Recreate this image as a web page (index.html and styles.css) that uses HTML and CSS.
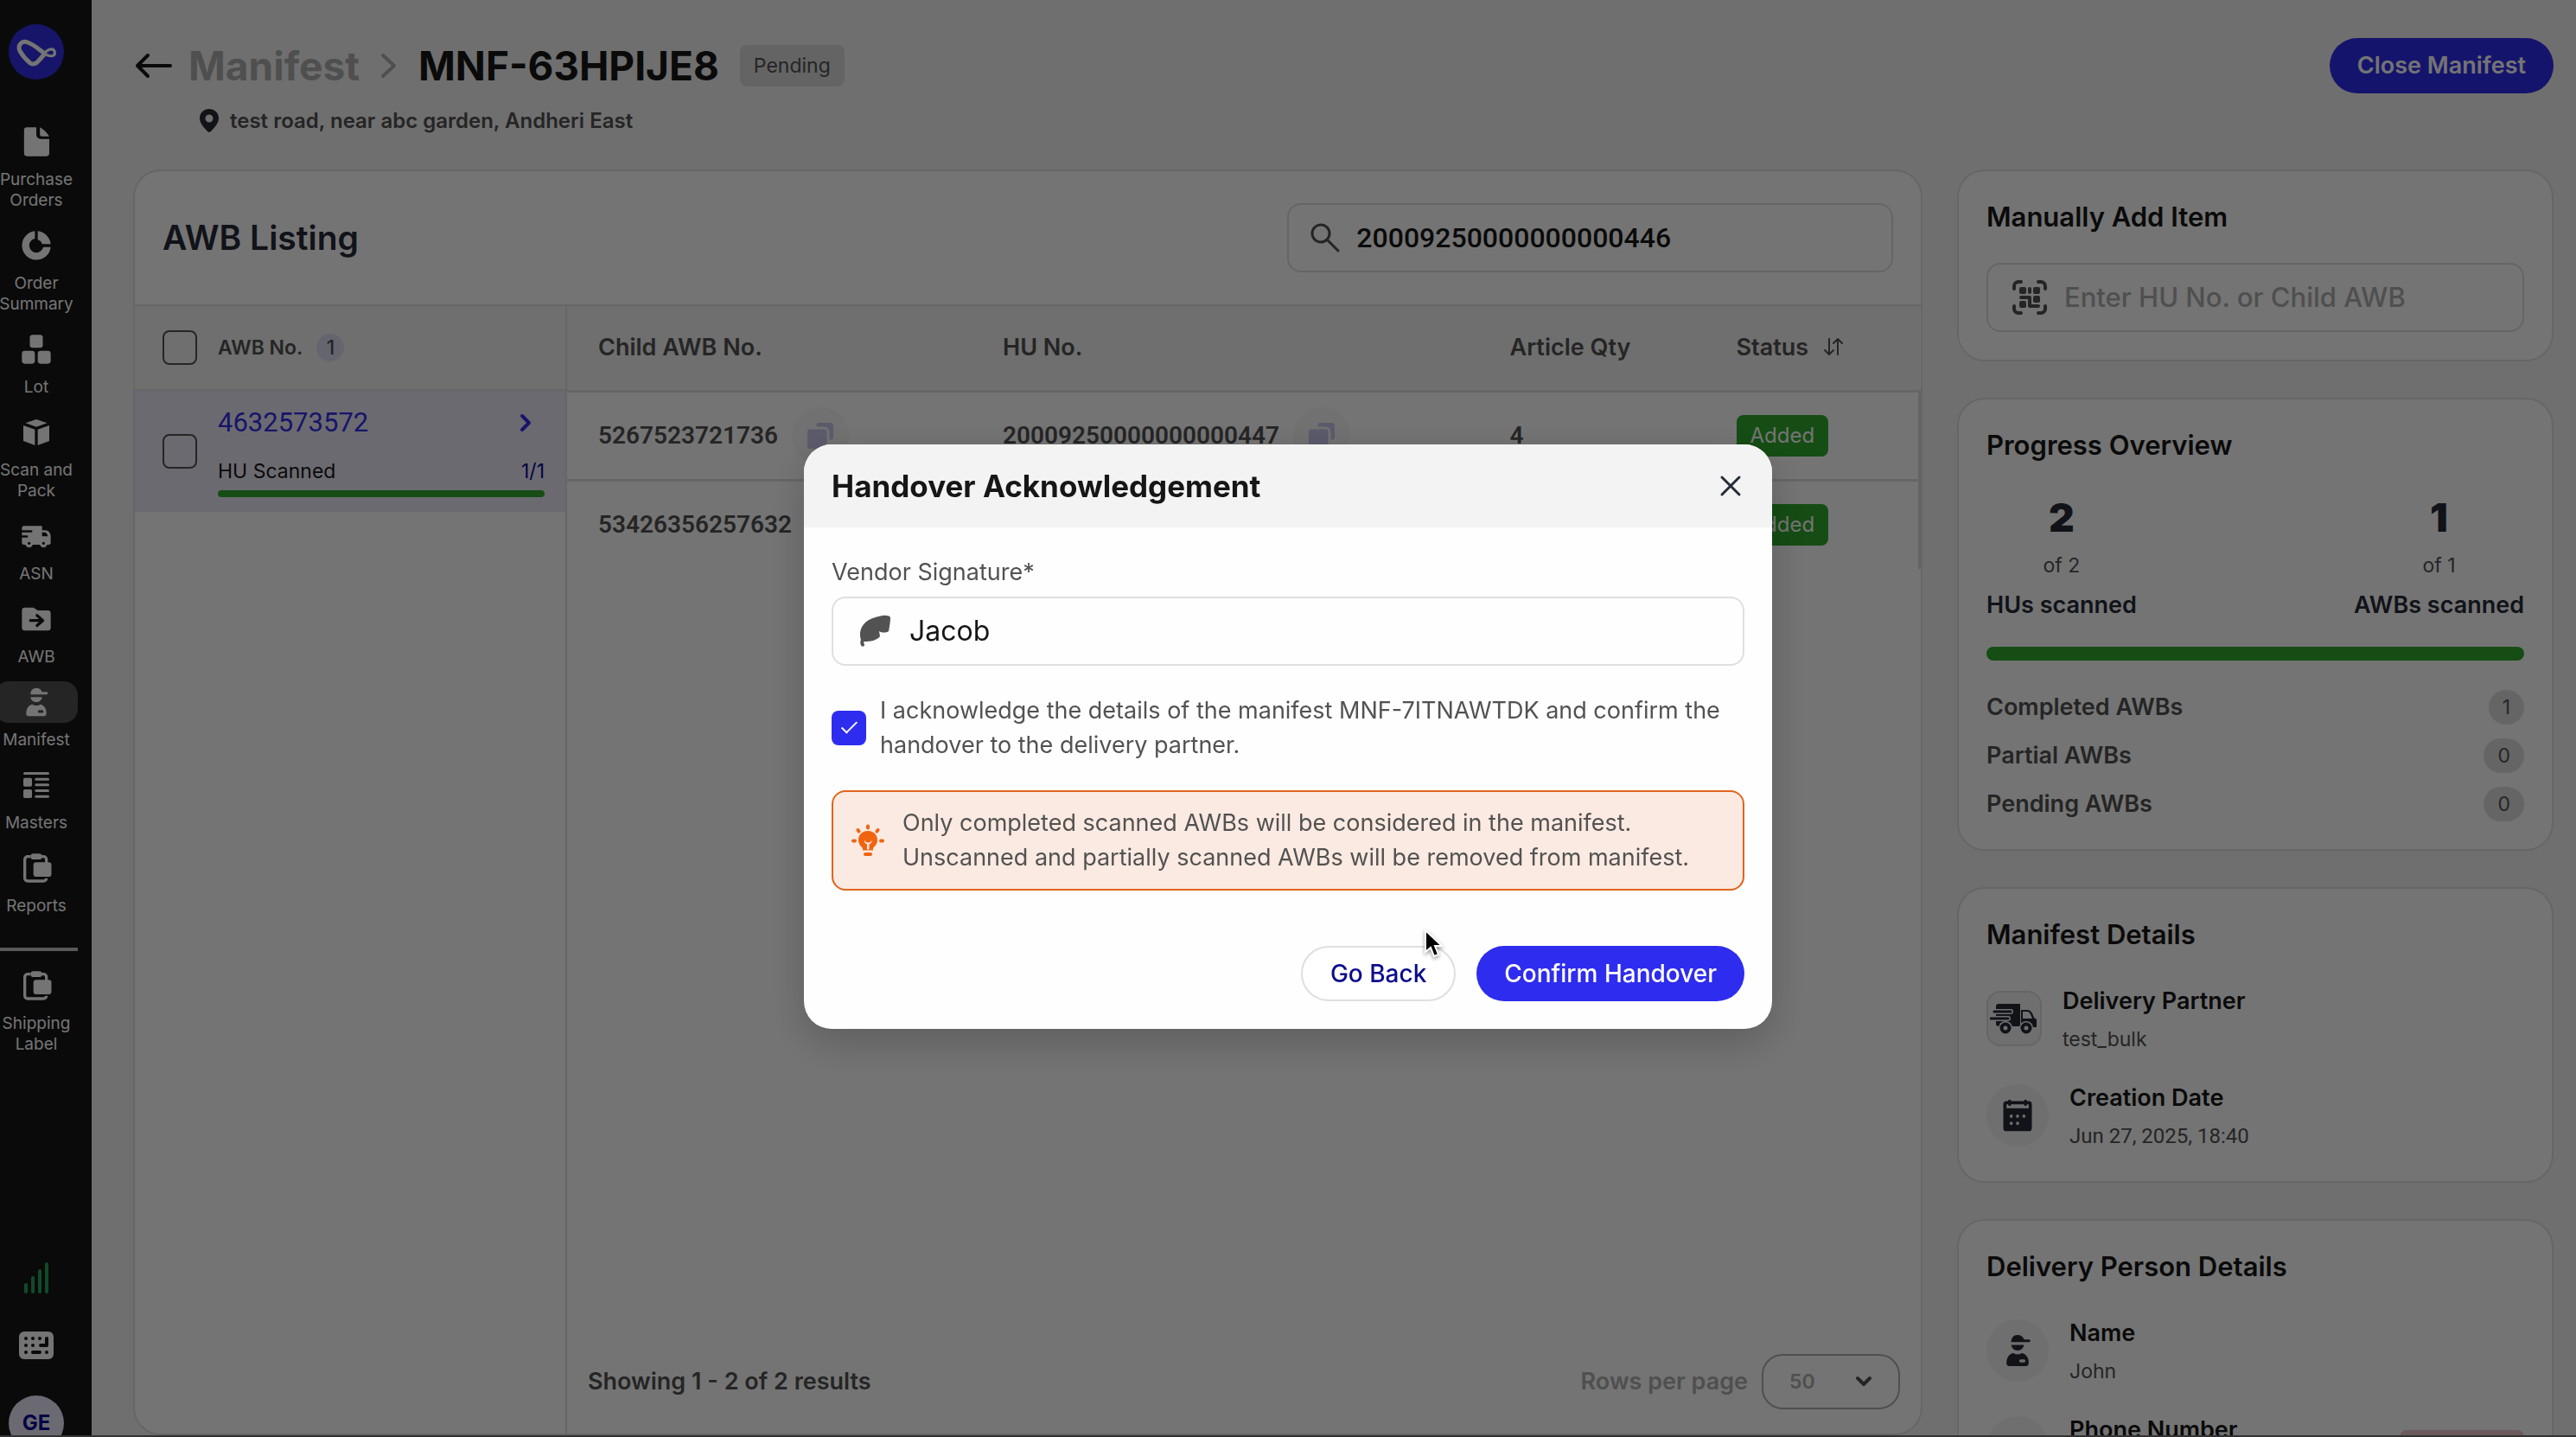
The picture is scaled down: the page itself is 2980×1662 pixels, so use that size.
FILE: index.html
```html
<!DOCTYPE html>
<html lang="en">
<head>
  <meta charset="UTF-8">
  <meta name="viewport" content="width=device-width, initial-scale=1.0">
  <title>Manifest - MNF-63HPIJE8</title>
  <link rel="stylesheet" href="styles.css">
</head>
<body>
  <!-- Shared icons -->
  <svg class="sprite" aria-hidden="true">
    <symbol id="i-clipboard" viewBox="0 0 24 24">
      <path fill="none" stroke="currentColor" stroke-width="2" d="M8 4H6a2 2 0 0 0-2 2v13a2 2 0 0 0 2 2h11a2 2 0 0 0 2-2M15 4h2a2 2 0 0 1 2 2v3"/>
      <rect x="8" y="2" width="8" height="4" rx="2"/>
      <rect x="10" y="8" width="12.500" height="10" rx="2"/>
    </symbol>
    <symbol id="i-person" viewBox="0 0 24 24">
      <path d="M8 6.500C8 4 9.500 2.200 12 2.200c2 0 3.500 1.200 4 2.800h3.200a.8.800 0 0 1 0 1.700H8z"/>
      <path d="M8 8.500h8c-.3 2.200-2 3.500-4 3.500s-3.700-1.300-4-3.500z"/>
      <path fill-rule="evenodd" d="M9.300 13.500c.8 1.200 4.600 1.200 5.400 0 3 .8 4.500 3.500 4.300 6.500 0 1-.6 1.800-1.600 1.800H6.600c-1 0-1.600-.8-1.600-1.800 0-3.200 1.300-5.700 4.300-6.500zM14 17.600a.9.900 0 0 0 0 1.900h2a.9.900 0 0 0 0-1.900z"/>
    </symbol>
    <symbol id="i-copy" viewBox="0 0 24 24">
      <path d="M9 4a2 2 0 0 1 2-2h9a2 2 0 0 1 2 2v9a2 2 0 0 1-2 2h-1V9a4 4 0 0 0-4-4H9z"/>
      <rect x="2" y="7" width="15" height="15" rx="2"/>
    </symbol>
  </svg>

  <div class="app">
    <aside class="sidebar">
      <svg class="logo" viewBox="0 0 64 64" aria-label="Home">
        <circle cx="32" cy="32" r="32" fill="#342fe6"/>
        <path fill="none" stroke="#fff" stroke-width="5" stroke-linejoin="round" d="M42 34C36 30 30 24 22 21c-7-3-12 4-9 10 4 7 7 10 12 14 3 2 6 1 9-2l8-9"/>
        <path fill="none" stroke="#fff" stroke-width="3" d="M38 38c4-6 6-8 10-9 6-1 7 6 3 7.500-4 1-7-.5-11-4"/>
      </svg>
      <nav class="nav">
        <a href="#" class="nav-item">
          <span class="nav-icon"><svg viewBox="0 0 24 24"><path d="M5.500 2H12v5a3 3 0 0 0 3 3h6v10a2 2 0 0 1-2 2H5.500a2 2 0 0 1-2-2V4a2 2 0 0 1 2-2z"/><path d="M14.500 2c2.500 1.500 5 3.800 6.500 6.200h-5a1.500 1.500 0 0 1-1.500-1.500z"/></svg></span>
          Purchase Orders
        </a>
        <a href="#" class="nav-item">
          <span class="nav-icon"><svg viewBox="0 0 24 24"><path d="M11 2v5.200a4.900 4.900 0 1 0 5.800 5.800H22A10 10 0 1 1 11 2z"/><path d="M13 2a10 10 0 0 1 9 9h-6a4 4 0 0 0-3-3z"/></svg></span>
          Order Summary
        </a>
        <a href="#" class="nav-item">
          <span class="nav-icon"><svg viewBox="0 0 24 24"><rect x="7.500" y="2" width="9" height="9" rx="2"/><rect x="2" y="13" width="9" height="9" rx="2"/><rect x="13" y="13" width="9" height="9" rx="2"/></svg></span>
          Lot
        </a>
        <a href="#" class="nav-item">
          <span class="nav-icon"><svg viewBox="0 0 24 24"><path d="M12 3l7.500 2.500L12 8.200 4.500 5.500zM3 7.200l8 2.800v11l-8-3zM21 7.200L13 10v11l8-3z"/></svg></span>
          Scan and Pack
        </a>
        <a href="#" class="nav-item">
          <span class="nav-icon"><svg viewBox="0 0 24 24"><path fill-rule="evenodd" d="M3.500 5H16v3h2.200C20.500 8 22 10 22 12.500v4a1.500 1.500 0 0 1-1.500 1.500h-1a2.600 2.600 0 0 1-5 0h-5a2.600 2.600 0 0 1-5 0H3.500A1.500 1.500 0 0 1 2 16.500V13h3.500a.7.700 0 0 0 0-1.500H2V9.500h6.500a.8.800 0 0 0 0-1.600H2V6.500A1.500 1.500 0 0 1 3.500 5zM16 9.500v2.700h4c-.3-1.500-1-2.700-2.500-2.700zM7 16a1 1 0 1 0 0 2 1 1 0 0 0 0-2zM17 16a1 1 0 1 0 0 2 1 1 0 0 0 0-2z"/></svg></span>
          ASN
        </a>
        <a href="#" class="nav-item">
          <span class="nav-icon"><svg viewBox="0 0 24 24"><path d="M4 4h6l3 2h7a2 2 0 0 1 2 2v10a2 2 0 0 1-2 2H4a2 2 0 0 1-2-2V6a2 2 0 0 1 2-2z"/><path class="cut" d="M8 13h8m-3.500-3.500L16.500 13l-4 3.500"/></svg></span>
          AWB
        </a>
        <a href="#" class="nav-item active">
          <span class="nav-icon"><svg><use href="#i-person"/></svg></span>
          Manifest
        </a>
        <a href="#" class="nav-item">
          <span class="nav-icon"><svg viewBox="0 0 24 24"><rect x="3" y="3" width="18" height="1.800" rx=".9"/><rect x="3" y="7" width="6" height="6" rx="1"/><rect x="3" y="15" width="6" height="6" rx="1"/><rect x="11" y="7" width="10" height="1.800" rx=".9"/><rect x="11" y="11" width="10" height="1.800" rx=".9"/><rect x="11" y="15" width="10" height="1.800" rx=".9"/><rect x="11" y="19" width="10" height="1.800" rx=".9"/></svg></span>
          Masters
        </a>
        <a href="#" class="nav-item">
          <span class="nav-icon"><svg><use href="#i-clipboard"/></svg></span>
          Reports
        </a>
        <hr class="nav-divider">
        <a href="#" class="nav-item">
          <span class="nav-icon"><svg><use href="#i-clipboard"/></svg></span>
          Shipping Label
        </a>
      </nav>
      <div class="sidebar-footer">
        <svg class="signal" viewBox="0 0 40 40" aria-label="Connection"><path d="M8 28v8M16 20v16M24 12v24M32 4v32"/></svg>
        <svg class="keypad" viewBox="0 0 40 40" aria-label="Keyboard">
          <rect y="4" width="40" height="32" rx="6"/>
          <path class="cut" d="M8 12h0M16 12h0M24 12h0M8 20h0M16 20h0M8 28h0M16 28h8M32 28h0M32 12v8h-7"/>
        </svg>
        <span class="avatar">GE</span>
      </div>
    </aside>

    <main class="main">
      <header class="page-header">
        <div>
          <div class="breadcrumb">
            <a href="#" class="back" aria-label="Back"><svg viewBox="0 0 48 48"><path d="M17 12L5 24l12 12M5 24h38"/></svg></a>
            <a href="#" class="crumb">Manifest</a>
            <svg class="crumb-sep" viewBox="0 0 24 48"><path d="M5 12l13 12L5 36"/></svg>
            <h1>MNF-63HPIJE8</h1>
            <span class="tag">Pending</span>
          </div>
          <p class="address">
            <svg viewBox="0 0 24 28"><path fill-rule="evenodd" d="M12 0c6 0 11 4.500 11 10.500C23 17 17 23 13.500 26.300a2.200 2.200 0 0 1-3 0C7 23 1 17 1 10.500 1 4.500 6 0 12 0zm0 6.500a4.500 4.500 0 1 0 0 9 4.500 4.500 0 0 0 0-9z"/></svg>
            test road, near abc garden, Andheri East
          </p>
        </div>
        <button type="button" class="btn btn-primary btn-strong">Close Manifest</button>
      </header>

      <div class="content">
        <section class="card listing">
          <div class="listing-header">
            <h2>AWB Listing</h2>
            <div class="field search">
              <svg viewBox="0 0 40 40"><circle cx="15" cy="15" r="10"/><path d="M23 23l12 12"/></svg>
              <input type="text" class="num" aria-label="Search" value="20009250000000000446">
            </div>
          </div>
          <div class="listing-body">
            <div class="awb-panel">
              <div class="awb-head">
                <input type="checkbox" class="check" id="all">
                <label for="all">AWB No.</label>
                <span class="count">1</span>
              </div>
              <div class="awb-row">
                <input type="checkbox" class="check" aria-label="Select 4632573572">
                <div class="awb-info">
                  <a href="#" class="awb-link num">4632573572 <svg viewBox="0 0 24 24"><path d="M8 4l8 8-8 8"/></svg></a>
                  <div class="awb-scan"><span>HU Scanned</span><span class="scan-count">1/1</span></div>
                  <div class="bar"></div>
                </div>
              </div>
            </div>
            <div class="hu-panel">
              <table>
                <colgroup><col class="col-child"><col><col class="col-qty"><col class="col-status"></colgroup>
                <thead>
                  <tr>
                    <th>Child AWB No.</th>
                    <th>HU No.</th>
                    <th>Article Qty</th>
                    <th>Status <svg class="sort" viewBox="0 0 28 28"><path d="M9 5v18M4 18l5 5 5-5M19 23V5M14 10l5-5 5 5"/></svg></th>
                  </tr>
                </thead>
                <tbody>
                  <tr>
                    <td><div class="cell">5267523721736 <button type="button" class="copy" aria-label="Copy"><svg><use href="#i-copy"/></svg></button></div></td>
                    <td><div class="cell">20009250000000000447 <button type="button" class="copy" aria-label="Copy"><svg><use href="#i-copy"/></svg></button></div></td>
                    <td>4</td>
                    <td><span class="status">Added</span></td>
                  </tr>
                  <tr>
                    <td><div class="cell">53426356257632 <button type="button" class="copy" aria-label="Copy"><svg><use href="#i-copy"/></svg></button></div></td>
                    <td><div class="cell">20009250000000000446 <button type="button" class="copy" aria-label="Copy"><svg><use href="#i-copy"/></svg></button></div></td>
                    <td>4</td>
                    <td><span class="status">Added</span></td>
                  </tr>
                </tbody>
              </table>
              <div class="pager">
                <span>Showing 1 - 2 of 2 results</span>
                <label for="rows">Rows per page</label>
                <div class="select">
                  <select id="rows"><option>50</option></select>
                  <svg viewBox="0 0 24 24"><path d="M5 8l7 7 7-7"/></svg>
                </div>
              </div>
            </div>
          </div>
        </section>

        <div class="side">
          <section class="card panel">
            <h3>Manually Add Item</h3>
            <div class="field">
              <svg class="scan-icon" viewBox="0 0 40 40">
                <path class="line" d="M2 10V7a5 5 0 0 1 5-5h3M30 2h3a5 5 0 0 1 5 5v3M38 30v3a5 5 0 0 1-5 5h-3M10 38H7a5 5 0 0 1-5-5v-3"/>
                <rect x="8" y="8" width="8" height="8" rx="2"/><rect x="18" y="8" width="4" height="8" rx="2"/><rect x="24" y="8" width="8" height="8" rx="2"/><path d="M10 18h10a2 2 0 0 1 2 2v8h8a2 2 0 0 1 0 4H20a2 2 0 0 1-2-2v-8h-8a2 2 0 0 1 0-4z"/><rect x="24" y="18" width="8" height="8" rx="2"/><rect x="8" y="24" width="8" height="8" rx="2"/>
              </svg>
              <input type="text" aria-label="HU No. or Child AWB" placeholder="Enter HU No. or Child AWB">
            </div>
          </section>

          <section class="card panel">
            <h3>Progress Overview</h3>
            <div class="stats">
              <div class="stat"><strong>2</strong><small>of 2</small><span>HUs scanned</span></div>
              <div class="stat"><strong>1</strong><small>of 1</small><span>AWBs scanned</span></div>
            </div>
            <div class="bar bar-lg"></div>
            <ul class="totals">
              <li>Completed AWBs <span class="pill">1</span></li>
              <li>Partial AWBs <span class="pill">0</span></li>
              <li>Pending AWBs <span class="pill">0</span></li>
            </ul>
          </section>

          <section class="card panel">
            <h3>Manifest Details</h3>
            <div class="detail">
              <span class="thumb">
                <svg viewBox="0 0 56 56">
                  <path d="M7 14a3 3 0 0 1 3-3h25v26H10a3 3 0 0 1-3-3z"/>
                  <path fill-rule="evenodd" d="M36 18h7c4 0 6 3 8 9l3 2v9H36zm2 2v8h11c-2-5-3-8-6-8z"/>
                  <path class="streak-edge" d="M5 20h19M1 28h20"/>
                  <path class="streak" d="M5 20h19M1 28h20"/>
                  <circle class="wheel-edge" cx="18" cy="39" r="8"/><circle class="wheel-edge" cx="42" cy="39" r="8"/>
                  <circle class="wheel" cx="18" cy="39" r="4.500"/><circle class="wheel" cx="42" cy="39" r="4.500"/>
                </svg>
              </span>
              <div><h4>Delivery Partner</h4><p>test_bulk</p></div>
            </div>
            <div class="detail">
              <span class="round">
                <svg viewBox="0 0 24 24"><path fill-rule="evenodd" d="M7 2a1 1 0 0 1 1 1h8a1 1 0 0 1 2 0h1a2 2 0 0 1 2 2v15a2 2 0 0 1-2 2H5a2 2 0 0 1-2-2V5a2 2 0 0 1 2-2h1a1 1 0 0 1 1-1zM5 5v2.500h14V5h-1a1 1 0 0 1-2 0H8a1 1 0 0 1-2 0z"/><path class="dots" d="M8 12.500h0M12 12.500h0M16 12.500h0M8 17h0M12 17h0"/></svg>
              </span>
              <div><h4>Creation Date</h4><p class="num">Jun 27, 2025, 18:40</p></div>
            </div>
          </section>

          <section class="card panel">
            <h3>Delivery Person Details</h3>
            <div class="detail">
              <span class="round"><svg><use href="#i-person"/></svg></span>
              <div><h4>Name</h4><p>John</p></div>
            </div>
            <div class="detail">
              <span class="round"></span>
              <div><h4>Phone Number</h4><p>&nbsp;</p></div>
              <span class="alert-tag"></span>
            </div>
          </section>
        </div>
      </div>
    </main>
  </div>

  <div class="overlay">
    <div class="modal" role="dialog" aria-modal="true" aria-labelledby="modal-title">
      <div class="modal-header">
        <h2 id="modal-title">Handover Acknowledgement</h2>
        <button type="button" class="close" aria-label="Close"><svg viewBox="0 0 40 40"><path d="M10 10l20 20M30 10L10 30"/></svg></button>
      </div>
      <form class="modal-body">
        <label class="field-label" for="signature">Vendor Signature*</label>
        <div class="field">
          <svg class="feather" viewBox="0 0 40 40"><path d="M38 4C37 2 33 1.500 29 2 14 4 4 11 3 22c0 3 0 6 1 8-1 2-1 4 0 6 0 2 4 2 4 0l-1-4c8 0 15-1 19-6l-1-6c3 2 8 2 11 0 1-5 2-11 2-16z"/></svg>
          <input type="text" id="signature" class="signature" value="Jacob">
        </div>
        <div class="ack">
          <input type="checkbox" class="check" id="ack" checked>
          <label for="ack">I acknowledge the details of the manifest MNF-7ITNAWTDK and confirm the handover to the delivery partner.</label>
        </div>
        <div class="notice">
          <svg viewBox="0 0 40 40">
            <path fill-rule="evenodd" d="M20 9c6.500 0 11 4.500 11 10.500 0 4.500-2.500 7-5 9.500v2.500H14V29c-2.500-2.500-5-5-5-9.500C9 13.500 13.500 9 20 9zm-3.500 11.500c-1.500-1.500-.5 3 2.500 4v6h2.500v-6c3-1 4-5.500 2.500-4-.8 1.500-2 2-3.500 2s-3-.5-4-2z"/>
            <rect x="15" y="34" width="10" height="4" rx="2"/>
            <path class="rays" d="M20 3.500v2M8.500 8l1 1.500M31.500 8l-1 1.500M3 20.500h2M35 20.500h2"/>
          </svg>
          <p>Only completed scanned AWBs will be considered in the manifest.<br>Unscanned and partially scanned AWBs will be removed from manifest.</p>
        </div>
        <div class="actions">
          <button type="button" class="btn btn-outline">Go Back</button>
          <button type="button" class="btn btn-primary">Confirm Handover</button>
        </div>
      </form>
      <svg class="pointer" viewBox="0 0 24 36"><path d="M3 2v25l6-5 4 10 5-2-4-10h8z"/></svg>
    </div>
  </div>
</body>
</html>
```
FILE: styles.css
```css
*, *::before, *::after {
  margin: 0;
  padding: 0;
  box-sizing: border-box;
}

body {
  font-family: Inter, "Liberation Sans", sans-serif;
  font-size: 27px;
  line-height: 40px;
  color: #161616;
  background: #f4f4f4;
  overflow: hidden;
}

button, input, select {
  font: inherit;
  color: inherit;
}

a {
  color: inherit;
  text-decoration: none;
}

svg {
  flex: none;
  fill: currentColor;
}

.sprite {
  display: none;
}

.num {
  font-family: Roboto, Inter, sans-serif;
}

.app {
  display: flex;
  height: 100vh;
  overflow: hidden;
}

/* Sidebar */
.sidebar {
  display: flex;
  flex-direction: column;
  flex: none;
  width: 106px;
  padding-top: 28px;
  background: #161616;
  color: #fff;
  overflow: hidden;
}

.logo {
  width: 64px;
  height: 64px;
  margin-left: 10px;
}

.nav {
  display: flex;
  flex-direction: column;
  gap: 16px;
  width: 96px;
  margin: 48px 0 0 -6px;
}

.nav-item {
  font-size: 19px;
  line-height: 24px;
  text-align: center;
}

.nav-icon {
  display: flex;
  align-items: center;
  justify-content: center;
  height: 48px;
  margin-bottom: 8px;
  border-radius: 16px;
}

.nav-icon svg {
  width: 40px;
  height: 40px;
}

.active .nav-icon {
  background: #525252;
}

.nav-divider {
  height: 4px;
  margin-top: 20px;
  border: 0;
  background: #c4c4c4;
}

.cut {
  fill: none;
  stroke: #161616;
  stroke-width: 2;
  stroke-linecap: round;
  stroke-linejoin: round;
}

.sidebar-footer {
  display: flex;
  flex-direction: column;
  align-items: center;
  gap: 38px;
  width: 96px;
  margin: auto 0 -16px -6px;
}

.sidebar-footer svg {
  width: 40px;
  height: 40px;
}

.signal {
  stroke: #26a35a;
  stroke-width: 4;
  stroke-linecap: round;
}

.keypad .cut {
  stroke-width: 4;
}

.avatar {
  width: 64px;
  height: 64px;
  border-radius: 50%;
  background: #ebe9fb;
  color: #0c0c96;
  font-size: 24px;
  font-weight: 700;
  line-height: 64px;
  text-align: center;
}

/* Page header */
.main {
  display: flex;
  flex: 1;
  flex-direction: column;
  min-width: 0;
  padding: 44px 26px 2px 48px;
}

.page-header {
  display: flex;
  align-items: flex-start;
  justify-content: space-between;
  margin-bottom: 40px;
}

.breadcrumb {
  display: flex;
  align-items: center;
  height: 64px;
  font-size: 46px;
  font-weight: 700;
}

.back, .back svg {
  display: block;
  width: 48px;
  height: 48px;
}

.back {
  margin-right: 16px;
}

.back svg, .crumb-sep, .awb-link svg, .sort, .select svg, .search svg, .close svg {
  fill: none;
  stroke: currentColor;
  stroke-width: 4;
  stroke-linecap: round;
  stroke-linejoin: round;
}

.crumb, .crumb-sep {
  color: #aeaeae;
}

.crumb-sep {
  width: 24px;
  height: 48px;
  margin: 0 22px;
}

h1 {
  font-size: 46px;
}

.tag {
  height: 48px;
  margin-left: 24px;
  padding: 0 16px;
  border-radius: 8px;
  background: #dcdcdc;
  color: #525252;
  font-size: 23px;
  font-weight: 400;
  line-height: 48px;
}

.address {
  display: flex;
  align-items: center;
  gap: 12px;
  margin: 16px 0 0 76px;
  color: #525252;
  font-size: 24px;
  font-weight: 600;
  line-height: 32px;
}

.address svg {
  width: 24px;
  height: 28px;
  color: #262b38;
}

.btn {
  height: 64px;
  padding: 0 32px;
  border: 0;
  border-radius: 32px;
  font-size: 28px;
  font-weight: 500;
  white-space: nowrap;
}

.btn-primary {
  background: #2e2cef;
  color: #fff;
}

.btn-strong {
  font-size: 27px;
  font-weight: 600;
}

.btn-outline {
  border: 2px solid #dfdfdf;
  background: #fff;
  color: #0c0c8c;
}

/* Layout */
.content {
  display: grid;
  grid-template-columns: 3fr 1fr;
  grid-template-rows: minmax(0, 1fr);
  gap: 40px;
  flex: 1;
  min-height: 0;
}

.card {
  border: 2px solid #e0e0e0;
  border-radius: 32px;
  background: #fff;
}

.field {
  display: flex;
  align-items: center;
  gap: 20px;
  height: 80px;
  padding: 0 28px;
  border: 2px solid #dfdfdf;
  border-radius: 16px;
  color: #525252;
}

.field svg {
  width: 40px;
  height: 40px;
}

.field input {
  flex: 1;
  min-width: 0;
  border: 0;
  outline: 0;
  background: none;
  color: #161616;
  font-size: 31px;
  font-weight: 500;
}

.field input::placeholder {
  color: #aeaeae;
  opacity: 1;
}

.check {
  flex: none;
  width: 40px;
  height: 40px;
  border: 2px solid #525252;
  border-radius: 8px;
  appearance: none;
}

.check:checked {
  display: grid;
  place-items: center;
  border: 0;
  background: #2e2cef;
}

.check:checked::after {
  content: "";
  width: 9px;
  height: 18px;
  margin-bottom: 6px;
  border: solid #fff;
  border-width: 0 2px 2px 0;
  transform: rotate(45deg);
}

/* AWB listing */
.listing {
  display: flex;
  flex-direction: column;
  overflow: hidden;
}

.listing-header {
  display: flex;
  align-items: center;
  justify-content: space-between;
  flex: none;
  height: 156px;
  padding: 0 32px;
  border-bottom: 2px solid #e0e0e0;
}

.listing-header h2 {
  color: #262b38;
  font-size: 39px;
  font-weight: 600;
}

.search {
  gap: 16px;
  width: 35%;
  padding: 0 22px;
}

.search svg {
  stroke-width: 3;
}

.search .num {
  font-size: 32px;
}

.listing-body {
  display: grid;
  grid-template-columns: 500px 1fr;
  flex: 1;
  min-height: 0;
}

.awb-panel {
  border-right: 2px solid #e0e0e0;
}

.awb-head {
  display: flex;
  align-items: center;
  height: 98px;
  padding: 0 32px;
  border-bottom: 2px solid #e0e0e0;
  background: #f4f4f4;
  color: #525252;
  font-size: 23px;
  font-weight: 600;
}

.awb-head label {
  margin: 0 16px 0 24px;
}

.count {
  width: 32px;
  height: 32px;
  border-radius: 50%;
  background: #dfddf3;
  font-weight: 500;
  line-height: 32px;
  text-align: center;
}

.awb-row {
  display: flex;
  align-items: center;
  gap: 24px;
  height: 140px;
  padding: 0 24px 0 32px;
  background: #eceaf8;
}

.awb-info {
  flex: 1;
}

.awb-link {
  display: flex;
  align-items: center;
  justify-content: space-between;
  padding-right: 10px;
  color: #342fe6;
  font-size: 31px;
}

.awb-link svg {
  width: 24px;
  height: 24px;
}

.awb-scan {
  display: flex;
  justify-content: space-between;
  margin: 20px 0 6px;
  font-size: 23px;
  line-height: 32px;
}

.scan-count {
  color: #0c0c96;
}

.bar {
  height: 8px;
  border-radius: 8px;
  background: #2ea92c;
}

.hu-panel {
  display: flex;
  flex-direction: column;
}

table {
  width: 100%;
  border-collapse: collapse;
  table-layout: fixed;
}

.col-child {
  width: 468px;
}

.col-qty {
  width: 262px;
}

.col-status {
  width: 248px;
}

th, td {
  padding: 0 0 0 36px;
  border-bottom: 3px solid #e0e0e0;
  color: #525252;
  font-weight: 600;
  text-align: left;
}

th {
  height: 98px;
  background: #f4f4f4;
}

td {
  height: 103px;
  font-family: Roboto, Inter, sans-serif;
  font-size: 28px;
}

tbody {
  border-right: 3px solid #dcdcdc;
}

tbody tr:last-child td {
  border-bottom: 0;
}

.sort {
  width: 28px;
  height: 28px;
  margin-left: 8px;
  stroke-width: 2;
  vertical-align: -4px;
}

.cell {
  display: flex;
  align-items: center;
  gap: 16px;
}

.copy {
  display: flex;
  align-items: center;
  justify-content: center;
  width: 66px;
  height: 66px;
  border: 0;
  border-radius: 50%;
  background: #f8f8f8;
  color: #c9c7ee;
}

.copy svg {
  width: 36px;
  height: 36px;
}

.status {
  display: inline-block;
  height: 48px;
  padding: 0 16px;
  border-radius: 8px;
  background: #2ea92c;
  color: #fff;
  font-family: Inter, sans-serif;
  font-size: 24px;
  font-weight: 400;
  line-height: 48px;
}

.pager {
  display: flex;
  align-items: center;
  margin-top: auto;
  padding: 0 24px 28px;
  color: #525252;
  font-weight: 600;
}

.pager label {
  margin: 0 16px 0 auto;
  color: #aeaeae;
}

.select {
  position: relative;
  width: 160px;
}

.select select {
  display: block;
  width: 100%;
  height: 64px;
  padding-left: 30px;
  border: 2px solid #aeaeae;
  border-radius: 24px;
  background: none;
  color: #aeaeae;
  font-size: 23px;
  appearance: none;
}

.select svg {
  position: absolute;
  top: 20px;
  right: 30px;
  width: 24px;
  height: 24px;
}

/* Right column */
.side {
  display: flex;
  flex-direction: column;
  gap: 42px;
  min-height: 0;
  overflow: hidden;
}

.panel {
  flex: none;
  padding: 32px;
}

h3 {
  margin-bottom: 32px;
  font-size: 31px;
  font-weight: 600;
  line-height: 42px;
}

.scan-icon .line {
  fill: none;
  stroke: currentColor;
  stroke-width: 4;
  stroke-linecap: round;
}

.stats {
  display: flex;
  justify-content: space-between;
}

.stat {
  display: flex;
  flex-direction: column;
  align-items: center;
  gap: 10px;
  color: #262b38;
  font-weight: 600;
}

.stat strong {
  font-size: 46px;
  line-height: 60px;
}

.stat small {
  color: #525252;
  font-size: 23px;
  font-weight: 400;
  line-height: 32px;
}

.bar-lg {
  height: 16px;
  margin: 28px 0 34px;
}

.totals {
  display: flex;
  flex-direction: column;
  gap: 16px;
  color: #525252;
  font-weight: 600;
  list-style: none;
}

.totals li {
  display: flex;
  justify-content: space-between;
}

.pill {
  padding: 0 16px;
  border-radius: 20px;
  background: #dfdfdf;
  font-size: 23px;
  font-weight: 400;
}

.detail {
  display: flex;
  align-items: center;
  gap: 24px;
}

.detail + .detail {
  margin-top: 24px;
}

h4 {
  font-size: 27px;
  font-weight: 600;
  line-height: 48px;
}

.detail p {
  color: #525252;
  font-size: 23px;
}

.detail .num {
  font-size: 24px;
}

.thumb, .round {
  display: flex;
  align-items: center;
  justify-content: center;
  flex: none;
  color: #262b38;
}

.thumb {
  width: 64px;
  height: 64px;
  border: 2px solid #dfdfdf;
  border-radius: 16px;
  background: #f4f4f4;
}

.thumb svg {
  width: 56px;
  height: 56px;
}

.streak, .streak-edge {
  fill: none;
  stroke: #262b38;
  stroke-width: 3;
  stroke-linecap: round;
}

.streak-edge {
  stroke: #f4f4f4;
  stroke-width: 6;
}

.wheel {
  fill: #f4f4f4;
  stroke: #262b38;
  stroke-width: 4;
}

.wheel-edge {
  fill: #f4f4f4;
}

.round {
  width: 72px;
  height: 72px;
  border-radius: 50%;
  background: #f4f4f4;
}

.round svg {
  width: 44px;
  height: 44px;
}

.dots {
  fill: none;
  stroke: #f4f4f4;
  stroke-width: 2;
  stroke-linecap: round;
}

.alert-tag {
  width: 144px;
  height: 40px;
  margin-left: auto;
  border-radius: 8px;
  background: #ecc4c8;
}

/* Handover modal */
.overlay {
  position: fixed;
  inset: 0;
  display: flex;
  align-items: center;
  justify-content: center;
  padding-top: 44px;
  background: rgba(0, 0, 0, 0.545);
  border-bottom: 2px solid #333;
}

.modal {
  position: relative;
  width: 1120px;
  border-radius: 32px;
  background: #fefefe;
  box-shadow: 0 16px 48px rgba(0, 0, 0, 0.2);
}

.modal-header {
  display: flex;
  align-items: center;
  justify-content: space-between;
  height: 96px;
  padding: 0 28px 0 32px;
  border-radius: 32px 32px 0 0;
  background: #f3f3f3;
}

.modal-header h2 {
  font-size: 35px;
  font-weight: 700;
}

.close {
  display: flex;
  border: 0;
  background: none;
  color: #262b38;
}

.close svg {
  width: 40px;
  height: 40px;
  stroke-width: 3;
}

.modal-body {
  padding: 32px;
  color: #525252;
}

.field-label {
  display: block;
  margin-bottom: 8px;
}

.field .signature {
  font-size: 32px;
  font-weight: 400;
}

.ack {
  display: flex;
  align-items: center;
  gap: 16px;
  margin: 32px 0;
}

.notice {
  display: flex;
  align-items: center;
  gap: 20px;
  padding: 16px 20px;
  border: 2px solid #e0651c;
  border-radius: 16px;
  background: #fbeae1;
}

.notice svg {
  width: 40px;
  height: 40px;
  color: #f06410;
}

.rays {
  fill: none;
  stroke: currentColor;
  stroke-width: 4;
  stroke-linecap: round;
}

.actions {
  display: flex;
  justify-content: flex-end;
  gap: 24px;
  margin-top: 64px;
}

.pointer {
  position: absolute;
  right: 380px;
  bottom: 80px;
  width: 24px;
  height: 36px;
  fill: #000;
  stroke: #fff;
  stroke-width: 2;
  filter: drop-shadow(0 2px 2px rgba(0, 0, 0, 0.4));
}
```
